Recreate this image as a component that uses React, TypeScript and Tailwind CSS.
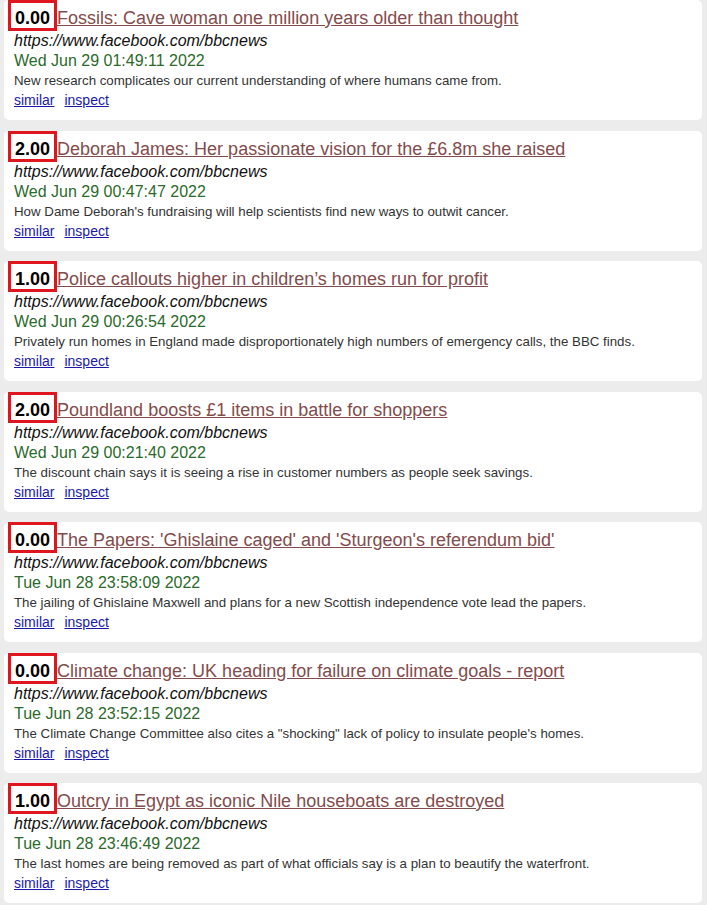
import React from "react";

type Item = {
  score: string;
  title: string;
  date: string;
  desc: string;
};

const items: Item[] = [
  {
    score: "0.00",
    title: "Fossils: Cave woman one million years older than thought",
    date: "Wed Jun 29 01:49:11 2022",
    desc: "New research complicates our current understanding of where humans came from.",
  },
  {
    score: "2.00",
    title: "Deborah James: Her passionate vision for the £6.8m she raised",
    date: "Wed Jun 29 00:47:47 2022",
    desc: "How Dame Deborah's fundraising will help scientists find new ways to outwit cancer.",
  },
  {
    score: "1.00",
    title: "Police callouts higher in children’s homes run for profit",
    date: "Wed Jun 29 00:26:54 2022",
    desc: "Privately run homes in England made disproportionately high numbers of emergency calls, the BBC finds.",
  },
  {
    score: "2.00",
    title: "Poundland boosts £1 items in battle for shoppers",
    date: "Wed Jun 29 00:21:40 2022",
    desc: "The discount chain says it is seeing a rise in customer numbers as people seek savings.",
  },
  {
    score: "0.00",
    title: "The Papers: 'Ghislaine caged' and 'Sturgeon's referendum bid'",
    date: "Tue Jun 28 23:58:09 2022",
    desc: "The jailing of Ghislaine Maxwell and plans for a new Scottish independence vote lead the papers.",
  },
  {
    score: "0.00",
    title: "Climate change: UK heading for failure on climate goals - report",
    date: "Tue Jun 28 23:52:15 2022",
    desc: 'The Climate Change Committee also cites a "shocking" lack of policy to insulate people\'s homes.',
  },
  {
    score: "1.00",
    title: "Outcry in Egypt as iconic Nile houseboats are destroyed",
    date: "Tue Jun 28 23:46:49 2022",
    desc: "The last homes are being removed as part of what officials say is a plan to beautify the waterfront.",
  },
];

const Card = ({ item, first }: { item: Item; first: boolean }) => {
  return (
    <div
      className={`ml-[4px] mr-[5px] h-[120px] rounded-[5px] bg-white pl-[10px] ${
        first ? "" : "mt-[10.5px]"
      }`}
    >
      <div className="flex h-[31px] items-baseline">
        <span className="ml-[-6px] border-[3px] border-[#e0161e] px-[4px] pt-[6px] pb-[1px] text-[18px] font-bold leading-[18px] text-black">
          {item.score}
        </span>
        <a href="#" className="text-[18px] leading-[22px] text-[#834c4c] underline">
          {item.title}
        </a>
      </div>
      <div className="text-[16px] italic leading-[19px] text-[#111]">
        https://www.facebook.com/bbcnews
      </div>
      <div className="text-[16px] leading-[21px] text-[#2b6a2b]">{item.date}</div>
      <div className="text-[13.3px] leading-[19px] text-[#333]">{item.desc}</div>
      <div className="flex gap-[10px] text-[14px] leading-[20px]">
        <a href="#" className="text-[#1a1aa6] underline">
          similar
        </a>
        <a href="#" className="text-[#1a1aa6] underline">
          inspect
        </a>
      </div>
    </div>
  );
};

const App = () => {
  return (
    <div className="min-h-[905px] bg-[#ececec] font-['Liberation_Sans',Arial,sans-serif]">
      {items.map((item, i) => (
        <Card key={i} item={item} first={i === 0} />
      ))}
    </div>
  );
};

export default App;
